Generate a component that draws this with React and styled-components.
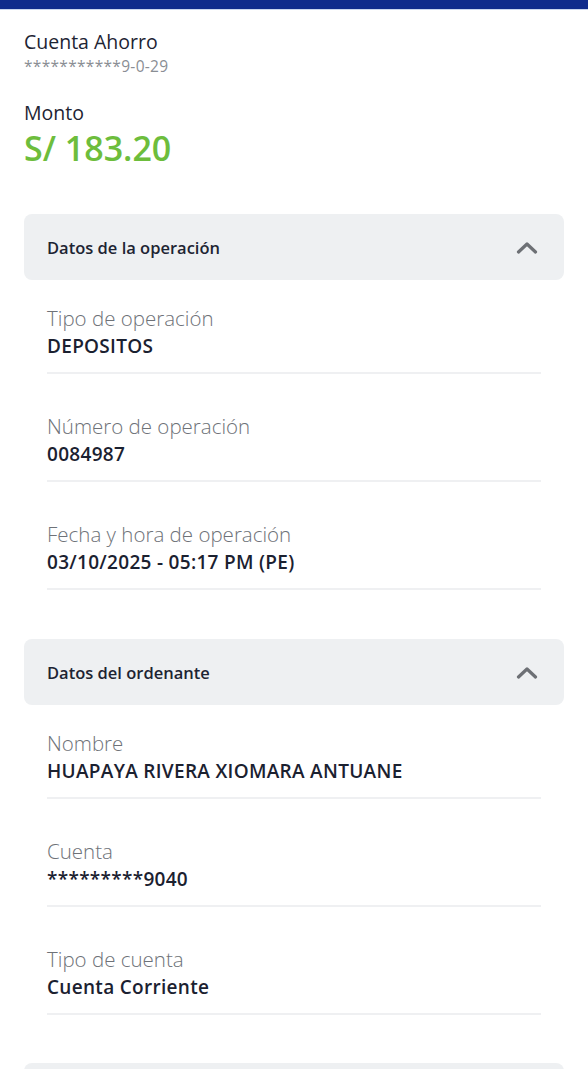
import React from "react";
import styled, { createGlobalStyle } from "styled-components";

const Global = createGlobalStyle`
  html, body { margin: 0; padding: 0; background: #ffffff; }
  body { font-family: "Open Sans", "Noto Sans", sans-serif; -webkit-font-smoothing: antialiased; }
  * { box-sizing: border-box; }
`;

const Page = styled.div`
  width: 588px;
  height: 1069px;
  background: #fff;
  overflow: hidden;
`;

const TopBar = styled.div`
  height: 10px;
  background: #0f2b8c;
  border-bottom: 1px solid #c9d5ee;
`;

const Content = styled.main`
  padding: 20px 24px 0;
  display: flex;
  flex-direction: column;
`;

const Summary = styled.section`
  display: flex;
  flex-direction: column;
`;

const AccountTitle = styled.div`
  font-size: 19.5px;
  line-height: 24px;
  font-weight: 500;
  color: #1d2433;
`;

const AccountNumber = styled.div`
  margin-top: 2px;
  font-size: 15.5px;
  line-height: 20px;
  color: #8a8e94;
  letter-spacing: 0.3px;
`;

const AmountLabel = styled.div`
  margin-top: 25px;
  font-size: 19.5px;
  line-height: 24px;
  font-weight: 500;
  color: #1d2433;
`;

const Amount = styled.div`
  margin-top: 3px;
  font-size: 34px;
  line-height: 40px;
  font-weight: 600;
  color: #6dbd3c;
`;

const Section = styled.section`
  margin-top: ${(p) => p.$gap}px;
  display: flex;
  flex-direction: column;
`;

const SectionHeader = styled.div`
  height: 66px;
  border-radius: 8px;
  background: #eef0f2;
  display: flex;
  align-items: center;
  justify-content: space-between;
  padding: 0 26px 0 23px;
`;

const SectionTitle = styled.span`
  font-size: 16.5px;
  font-weight: 600;
  color: #1d2433;
`;

const List = styled.div`
  display: flex;
  flex-direction: column;
  padding: 0 23px;
`;

const Row = styled.div`
  padding: 40px 0 15px;
  border-bottom: 2px solid #eff0f2;
  display: flex;
  flex-direction: column;
  gap: 5px;
  &:first-child { padding-top: 26px; }
`;

const Label = styled.div`
  font-size: 20.5px;
  line-height: 24px;
  font-weight: 300;
  color: #6e7278;
`;

const Value = styled.div`
  font-size: 19px;
  line-height: 22px;
  font-weight: 600;
  letter-spacing: 0.3px;
  color: #1b2130;
`;

const Chevron = () => (
  <svg width="22" height="13" viewBox="0 0 22 13" fill="none">
    <path d="M2.5 11 L11 3 L19.5 11" stroke="#6d7075" strokeWidth="3.2" strokeLinecap="round" strokeLinejoin="round" />
  </svg>
);

const sections = [
  {
    title: "Datos de la operación",
    gap: 46,
    rows: [
      ["Tipo de operación", "DEPOSITOS"],
      ["Número de operación", "0084987"],
      ["Fecha y hora de operación", "03/10/2025 - 05:17 PM (PE)"],
    ],
  },
  {
    title: "Datos del ordenante",
    gap: 49,
    rows: [
      ["Nombre", "HUAPAYA RIVERA XIOMARA ANTUANE"],
      ["Cuenta", "*********9040"],
      ["Tipo de cuenta", "Cuenta Corriente"],
    ],
  },
];

export default function App() {
  return (
    <Page>
      <Global />
      <TopBar />
      <Content>
        <Summary>
          <AccountTitle>Cuenta Ahorro</AccountTitle>
          <AccountNumber>***********9-0-29</AccountNumber>
          <AmountLabel>Monto</AmountLabel>
          <Amount>S/ 183.20</Amount>
        </Summary>
        {sections.map((s) => (
          <Section key={s.title} $gap={s.gap}>
            <SectionHeader>
              <SectionTitle>{s.title}</SectionTitle>
              <Chevron />
            </SectionHeader>
            <List>
              {s.rows.map(([l, v]) => (
                <Row key={l}>
                  <Label>{l}</Label>
                  <Value>{v}</Value>
                </Row>
              ))}
            </List>
          </Section>
        ))}
        <Section $gap={48}>
          <SectionHeader />
        </Section>
      </Content>
    </Page>
  );
}
